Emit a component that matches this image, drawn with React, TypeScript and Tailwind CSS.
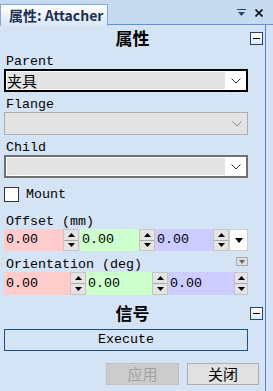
import React from 'react';

const mono = "font-['Liberation_Mono','Noto_Sans_CJK_SC',monospace]";
const cjk = "font-['Noto_Sans_CJK_SC',sans-serif]";

const Chevron = ({ color = '#333' }: { color?: string }) => (
  <svg width="10" height="6" viewBox="0 0 10 6">
    <polyline points="0.5,0.5 5,5 9.5,0.5" fill="none" stroke={color} strokeWidth="1" />
  </svg>
);

const MinusBox = () => (
  <div className="w-[13px] h-[13px] border border-[#24466b] bg-gradient-to-b from-white to-[#dfe9f5] flex items-center justify-center">
    <div className="w-[7px] h-[1px] bg-black" />
  </div>
);

const Combo = ({ value, variant }: { value?: string; variant: 'focus' | 'normal' | 'disabled' }) => {
  if (variant === 'disabled') {
    return (
      <div className="h-[23px] border border-[#adadad] bg-[#e3e3e3] flex items-center justify-end pr-[5px]">
        <Chevron color="#8a8a8a" />
      </div>
    );
  }
  return (
    <div
      className={
        variant === 'focus'
          ? 'h-[23px] flex bg-white border-2 border-black pl-[1px] py-[1px]'
          : 'h-[23px] flex bg-white border-2 border-[#707070] pl-[1px] py-[1px]'
      }
    >
      <div className={`flex-1 bg-[#e3e3e3] flex items-center text-[15px] leading-none text-black ${cjk}`}>{value}</div>
      <div className="w-[21px] flex items-center justify-center">
        <Chevron />
      </div>
    </div>
  );
};

const Spin = ({ w }: { w: string }) => (
  <div className={`${w} h-full flex flex-col border border-[#c4c4c4] bg-[#e4e4e4]`}>
    <div className="flex-1 flex items-center justify-center border-b border-[#a8a8a8]">
      <svg width="7" height="4" viewBox="0 0 7 4">
        <polygon points="3.5,0 7,4 0,4" fill="#000" />
      </svg>
    </div>
    <div className="flex-1 flex items-center justify-center">
      <svg width="7" height="4" viewBox="0 0 7 4">
        <polygon points="0,0 7,0 3.5,4" fill="#000" />
      </svg>
    </div>
  </div>
);

const Field = ({ w, bg }: { w: string; bg: string }) => (
  <div className={`${w} ${bg} h-full flex items-center pl-[2px] text-[13.33px] text-black ${mono}`}>0.00</div>
);

const Label = ({ text, h }: { text: string; h: string }) => (
  <div className={`${h} flex items-end text-[13.33px] leading-[15px] text-black ${mono}`}>{text}</div>
);

export default function App() {
  return (
    <div className="w-[273px] h-[391px] flex flex-col bg-[#d5e4f4] overflow-hidden select-none">
      {/* tab bar */}
      <div className="h-[25px] flex items-end bg-[#c6daf0] relative">
        <div className="h-[22px] w-[108px] shrink-0 border border-b-0 border-[#86a8d4] bg-gradient-to-b from-[#fdfeff] to-[#d8e6f6] flex items-center pl-[8px] whitespace-nowrap text-[14px] font-bold text-[#1c2f4f] font-['Noto_Sans_CJK_SC',sans-serif] relative z-10 -mb-[1px]">
          属性: Attacher
        </div>
        <div className="flex-1 h-[1px] bg-[#6591cb] self-end" />
        <div className="absolute right-[10px] top-[9px] flex items-center gap-[9px]">
          <svg width="9" height="8" viewBox="0 0 9 8">
            <rect x="0" y="0" width="9" height="1" fill="#27466a" />
            <polygon points="1,3 8,3 4.5,7" fill="#27466a" />
          </svg>
          <svg width="8" height="8" viewBox="0 0 8 8">
            <path d="M0.5 0.5 L7.5 7.5 M7.5 0.5 L0.5 7.5" stroke="#111" strokeWidth="1.6" />
          </svg>
        </div>
      </div>

      <div className="flex-1 flex">
        <div className="w-[266px] border-r border-[#5784c2] flex flex-col">
          {/* 属性 header */}
          <div className="h-[24px] flex items-center">
            <div className="w-[15px]" />
            <div className={`flex-1 text-center text-[17px] font-bold text-black leading-none ${cjk}`}>属性</div>
            <div className="mr-[2px] mt-[2px]">
              <MinusBox />
            </div>
          </div>

          <div className="w-[244px] ml-[4px] flex flex-col">
            <div className="pl-[2px]">
              <Label text="Parent" h="h-[20px]" />
            </div>
            <Combo value="夹具" variant="focus" />
            <div className="pl-[2px]">
              <Label text="Flange" h="h-[20px]" />
            </div>
            <Combo variant="disabled" />
            <div className="pl-[2px]">
              <Label text="Child" h="h-[20px]" />
            </div>
            <Combo variant="normal" />

            <div className="mt-[9px] h-[15px] flex items-center gap-[7px]">
              <div className="w-[15px] h-[15px] border border-[#333] bg-white" />
              <span className={`text-[13.33px] text-black ${mono}`}>Mount</span>
            </div>

            <div className="pl-[2px]">
              <Label text="Offset (mm)" h="h-[27px]" />
            </div>
            <div className="h-[22px] flex">
              <Field w="w-[59px]" bg="bg-[#ffcccc]" />
              <Spin w="w-[16px]" />
              <div className="w-[1px]" />
              <Field w="w-[59px]" bg="bg-[#ccffcc]" />
              <Spin w="w-[16px]" />
              <Field w="w-[58px]" bg="bg-[#ccccff]" />
              <Spin w="w-[16px]" />
              <div className="flex-1 bg-white border border-[#cfcfcf] flex items-center justify-center">
                <svg width="8" height="5" viewBox="0 0 8 5">
                  <polygon points="0,0 8,0 4,5" fill="#000" />
                </svg>
              </div>
            </div>

            <div className="h-[21px] flex items-end justify-between pl-[2px]">
              <span className={`text-[13.33px] leading-[15px] text-black ${mono}`}>Orientation (deg)</span>
              <div className="w-[12px] h-[9px] mb-[6px] border border-[#a9a9a9] bg-[#dedede] flex items-center justify-center">
                <svg width="6" height="4" viewBox="0 0 6 4">
                  <polygon points="0,0 6,0 3,4" fill="#6a6a6a" />
                </svg>
              </div>
            </div>
            <div className="h-[23px] flex">
              <Field w="w-[66px]" bg="bg-[#ffcccc]" />
              <Spin w="w-[16px]" />
              <Field w="w-[66px]" bg="bg-[#ccffcc]" />
              <Spin w="w-[16px]" />
              <Field w="w-[66px]" bg="bg-[#ccccff]" />
              <Spin w="w-[14px]" />
            </div>
          </div>

          {/* 信号 header */}
          <div className="h-[34px] flex items-center">
            <div className="w-[15px]" />
            <div className={`flex-1 text-center text-[17px] font-bold text-black leading-none ${cjk}`}>信号</div>
            <div className="mr-[2px] mt-[2px]">
              <MinusBox />
            </div>
          </div>

          <div className="w-[244px] ml-[4px] h-[22px] border-[1.5px] border-[#1d4f80] flex items-center justify-center">
            <span className={`text-[13.33px] text-black ${mono}`}>Execute</span>
          </div>

          <div className="mt-[12px] h-[22px] flex justify-end gap-[8px] pr-[6px]">
            <div className={`w-[73px] border border-[#bfbfbf] bg-[#cccccc] flex items-center justify-center text-[15px] text-[#a0a0a0] ${cjk}`}>
              应用
            </div>
            <div className={`w-[72px] border border-[#adadad] bg-[#e1e1e1] flex items-center justify-center text-[15px] text-black ${cjk}`}>
              关闭
            </div>
          </div>
        </div>
        <div className="flex-1 bg-[#d3e3f5]" />
      </div>
    </div>
  );
}
